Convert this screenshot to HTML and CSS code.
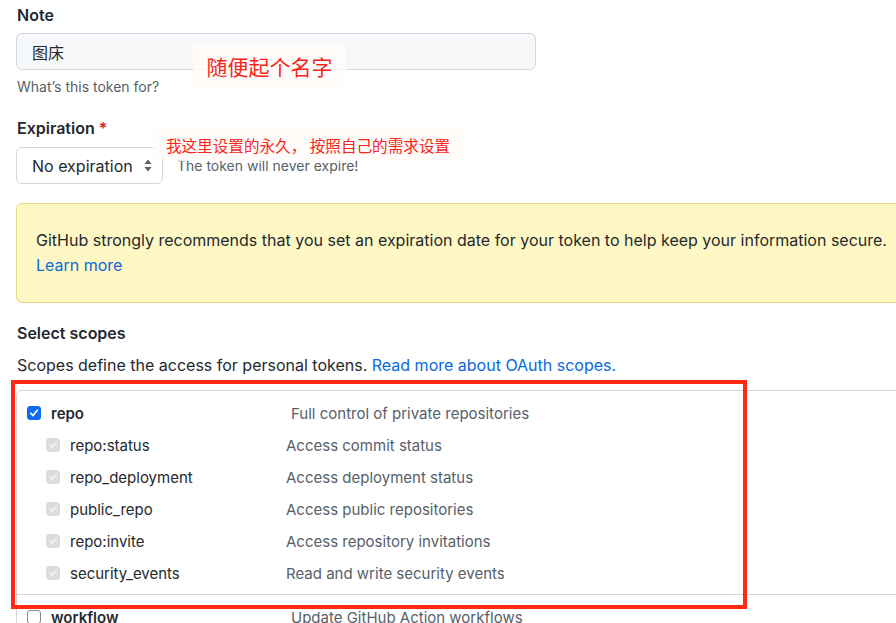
FILE: index.html
```html
<!DOCTYPE html>
<html lang="zh">
<head>
<meta charset="utf-8">
<title>New personal access token</title>
<link rel="stylesheet" href="styles.css">
</head>
<body>
<main class="page">
  <section class="field field-note">
    <label class="label">Note</label>
    <div class="input">图床</div>
    <p class="note">What’s this token for?</p>
  </section>

  <section class="field field-exp">
    <label class="label">Expiration <span class="req">*</span></label>
    <div class="exp-row">
      <div class="select">
        <span>No expiration</span>
        <svg class="updown" width="8" height="13" viewBox="0 0 8 13"><path d="M4 0.5 L7.5 5 H0.5 Z M4 12.5 L7.5 8 H0.5 Z" fill="#57606a"/></svg>
      </div>
      <span class="note exp-note">The token will never expire!</span>
    </div>
  </section>

  <div class="flash">
    <div>GitHub strongly recommends that you set an expiration date for your token to help keep your information secure.</div>
    <a class="link" href="#">Learn more</a>
  </div>

  <section class="scopes">
    <h3 class="label">Select scopes</h3>
    <p class="scopes-desc">Scopes define the access for personal tokens. <a class="link" href="#">Read more about OAuth scopes.</a></p>

    <div class="scope-table">
      <div class="group">
        <div class="row top">
          <span class="cb checked"><svg viewBox="0 0 14 14"><path d="M3.2 7.3 L5.9 10 L10.9 3.8" fill="none" stroke="#fff" stroke-width="2" stroke-linecap="round" stroke-linejoin="round"/></svg></span>
          <span class="name strong">repo</span>
          <span class="desc">Full control of private repositories</span>
        </div>
        <div class="row sub">
          <span class="cb disabled"><svg viewBox="0 0 14 14"><path d="M3.2 7.3 L5.9 10 L10.9 3.8" fill="none" stroke="#f4f4f4" stroke-width="2" stroke-linecap="round" stroke-linejoin="round"/></svg></span>
          <span class="name">repo:status</span>
          <span class="desc">Access commit status</span>
        </div>
        <div class="row sub">
          <span class="cb disabled"><svg viewBox="0 0 14 14"><path d="M3.2 7.3 L5.9 10 L10.9 3.8" fill="none" stroke="#f4f4f4" stroke-width="2" stroke-linecap="round" stroke-linejoin="round"/></svg></span>
          <span class="name">repo_deployment</span>
          <span class="desc">Access deployment status</span>
        </div>
        <div class="row sub">
          <span class="cb disabled"><svg viewBox="0 0 14 14"><path d="M3.2 7.3 L5.9 10 L10.9 3.8" fill="none" stroke="#f4f4f4" stroke-width="2" stroke-linecap="round" stroke-linejoin="round"/></svg></span>
          <span class="name">public_repo</span>
          <span class="desc">Access public repositories</span>
        </div>
        <div class="row sub">
          <span class="cb disabled"><svg viewBox="0 0 14 14"><path d="M3.2 7.3 L5.9 10 L10.9 3.8" fill="none" stroke="#f4f4f4" stroke-width="2" stroke-linecap="round" stroke-linejoin="round"/></svg></span>
          <span class="name">repo:invite</span>
          <span class="desc">Access repository invitations</span>
        </div>
        <div class="row sub">
          <span class="cb disabled"><svg viewBox="0 0 14 14"><path d="M3.2 7.3 L5.9 10 L10.9 3.8" fill="none" stroke="#f4f4f4" stroke-width="2" stroke-linecap="round" stroke-linejoin="round"/></svg></span>
          <span class="name">security_events</span>
          <span class="desc">Read and write security events</span>
        </div>
      </div>
      <div class="group">
        <div class="row top">
          <span class="cb"></span>
          <span class="name strong">workflow</span>
          <span class="desc">Update GitHub Action workflows</span>
        </div>
      </div>
    </div>
  </section>

  <div class="anno anno-1">随便起个名字</div>
  <div class="anno anno-2">我这里设置的永久， 按照自己的需求设置</div>
  <div class="red-frame"></div>
</main>
</body>
</html>
```

FILE: styles.css
```css
html, body {
  margin: 0;
  padding: 0;
  background: #fff;
  overflow: hidden;
}

body {
  font-family: Inter, "Liberation Sans", "Noto Sans CJK SC", sans-serif;
  color: #24292f;
  width: 896px;
  height: 623px;
}

.page {
  position: relative;
  padding: 5px 0 0 16px;
}

.label {
  display: block;
  margin: 0;
  font-size: 16px;
  line-height: 20px;
  font-weight: 600;
  padding-left: 1px;
}

.req { color: #cf222e; }

.input {
  margin-top: 8px;
  box-sizing: border-box;
  width: 520px;
  height: 37px;
  border: 1px solid #d0d7de;
  border-radius: 6px;
  background: #f6f8fa;
  padding: 0 15px;
  display: flex;
  align-items: center;
  font-size: 16px;
  font-family: "Noto Sans CJK SC", sans-serif;
  color: #24292f;
}

.note {
  margin: 0;
  font-size: 14px;
  line-height: 20px;
  color: #57606a;
}

.field-note .note {
  margin-top: 7px;
  padding-left: 1px;
}

.field-exp { margin-top: 21px; }

.exp-row {
  margin-top: 9px;
  display: flex;
  align-items: center;
  gap: 14px;
}

.select {
  box-sizing: border-box;
  width: 147px;
  height: 37px;
  border: 1px solid #d0d7de;
  border-radius: 6px;
  background: #fff;
  padding: 0 10px 0 15px;
  display: flex;
  align-items: center;
  justify-content: space-between;
  font-size: 16px;
}

.updown { display: block; }

.exp-note { padding-top: 1px; }

.flash {
  margin-top: 19px;
  box-sizing: border-box;
  width: 920px;
  padding: 24px 19px;
  border: 1px solid #e8d77e;
  border-radius: 6px;
  background: #fff8c5;
  font-size: 16px;
  line-height: 25px;
  color: #24292f;
}

.link {
  color: #0969da;
  text-decoration: none;
}

.scopes { margin-top: 20px; }

.scopes-desc {
  margin: 10px 0 0;
  padding-left: 1px;
  font-size: 16px;
  line-height: 24px;
}

.scope-table {
  margin-top: 13px;
  width: 920px;
  border: 1px solid #d0d7de;
  border-radius: 6px;
}

.group {
  padding: 6px 0 5px;
}

.group + .group {
  border-top: 1px solid #d0d7de;
}

.row {
  display: flex;
  align-items: center;
  height: 32px;
  font-size: 15px;
}

.row.top { padding-left: 10px; }
.row.sub { padding-left: 29px; }

.cb {
  box-sizing: border-box;
  width: 14px;
  height: 14px;
  border: 1px solid #8c8c8c;
  border-radius: 3px;
  background: #fff;
  flex: none;
  display: flex;
  align-items: center;
  justify-content: center;
}

.cb svg { width: 14px; height: 14px; display: block; }

.cb.checked {
  background: #0b6cf3;
  border-color: #0b6cf3;
}

.cb.disabled {
  background: #dcdcdc;
  border-color: #dcdcdc;
}

.name {
  margin-left: 10px;
  color: #24292f;
  flex: none;
}

.name.strong { font-weight: 600; }

.row.top .name { width: 240px; }
.row.sub .name { width: 216px; }

.desc { color: #57606a; }

.anno {
  position: absolute;
  color: #f8261a;
  background: rgba(255, 252, 248, 0.85);
  font-family: "Noto Sans CJK SC", sans-serif;
  display: flex;
  align-items: center;
  justify-content: center;
}

.anno-1 {
  left: 193px;
  top: 45px;
  width: 153px;
  height: 42px;
  font-size: 21px;
}

.anno-2 {
  left: 153px;
  top: 129px;
  width: 310px;
  height: 32px;
  font-size: 15.6px;
}

.red-frame {
  position: absolute;
  left: 11px;
  top: 380px;
  width: 736px;
  height: 229px;
  box-sizing: border-box;
  border: 4px solid #fe2a14;
}
```
